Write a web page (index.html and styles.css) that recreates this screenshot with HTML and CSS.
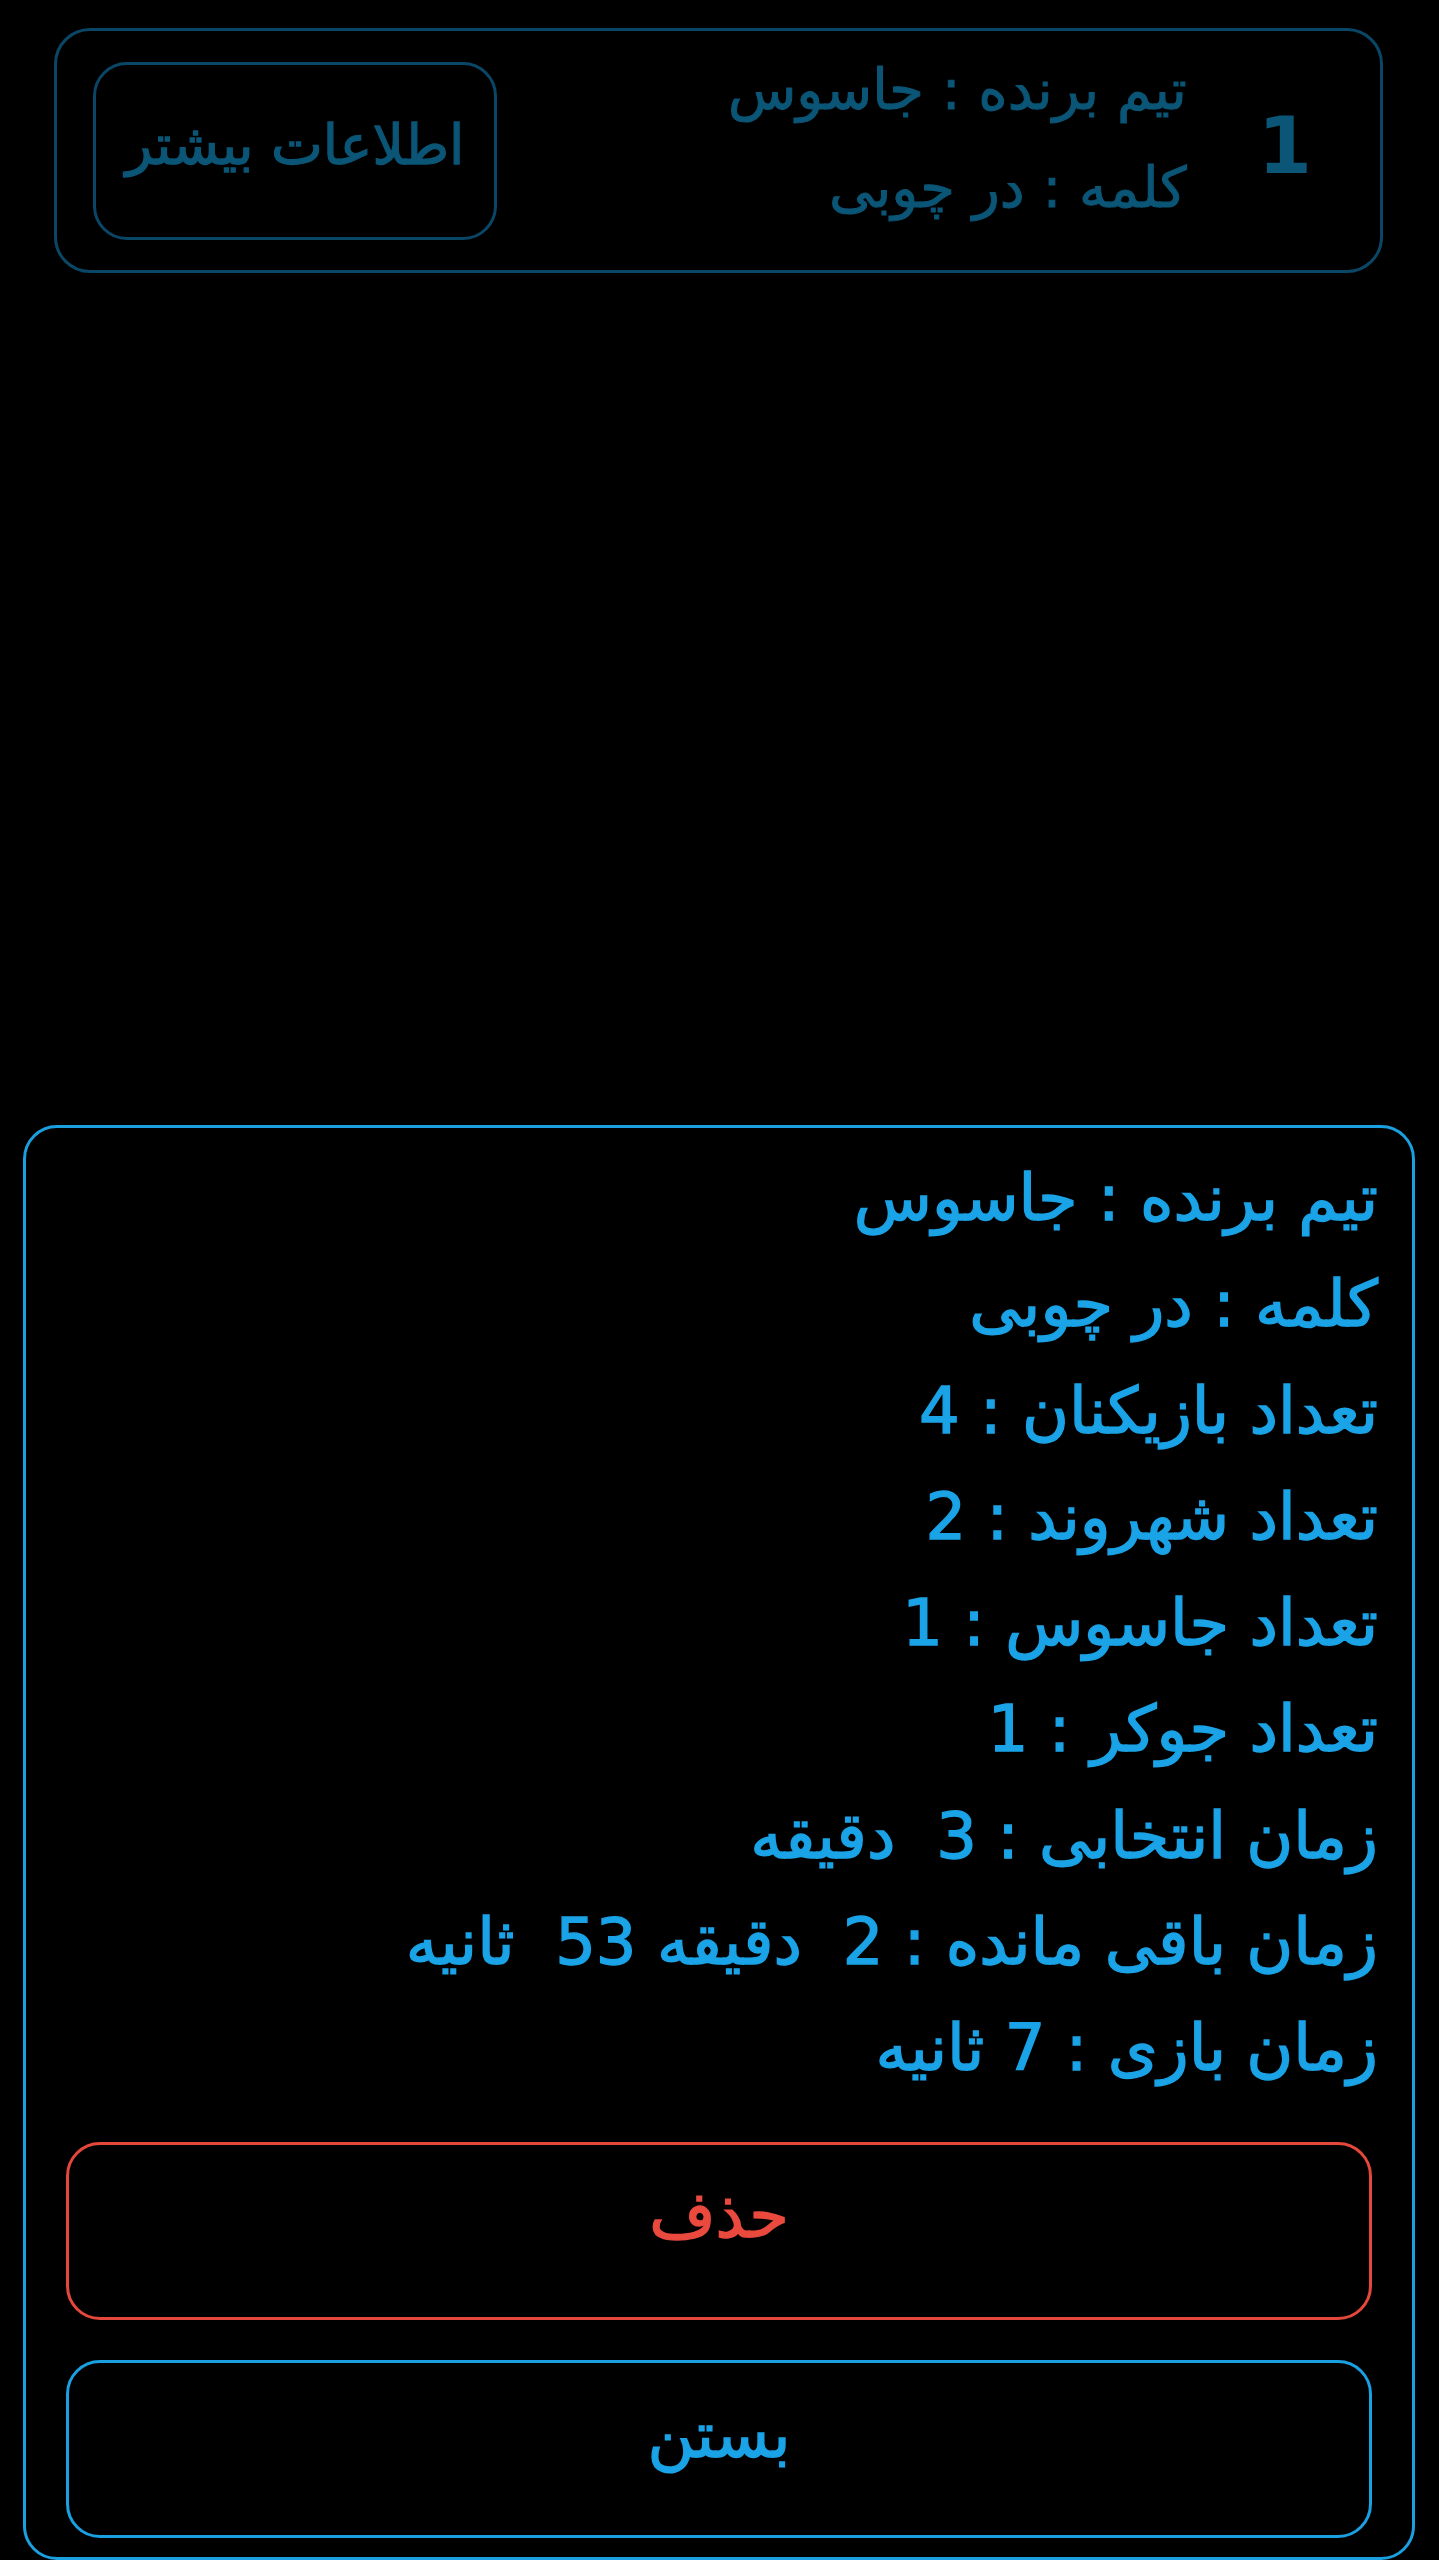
FILE: index.html
```html
<!DOCTYPE html>
<html lang="fa">
<head>
<meta charset="utf-8">
<title>بازی</title>
<link rel="stylesheet" href="styles.css">
</head>
<body>
<div class="page">
  <div class="game-card">
    <div class="game-number">1</div>
    <div class="game-summary">
      <div class="summary-line">تیم برنده : جاسوس</div>
      <div class="summary-line">کلمه : در چوبی</div>
    </div>
    <div class="more-btn">اطلاعات بیشتر</div>
  </div>

  <div class="details-panel">
    <div class="details-list">
      <div class="detail-line">تیم برنده : جاسوس</div>
      <div class="detail-line">کلمه : در چوبی</div>
      <div class="detail-line">تعداد بازیکنان : 4</div>
      <div class="detail-line">تعداد شهروند : 2</div>
      <div class="detail-line">تعداد جاسوس : 1</div>
      <div class="detail-line">تعداد جوکر : 1</div>
      <div class="detail-line">زمان انتخابی : 3  دقیقه</div>
      <div class="detail-line">زمان باقی مانده : 2  دقیقه 53  ثانیه</div>
      <div class="detail-line">زمان بازی : 7 ثانیه</div>
    </div>
    <div class="panel-btn btn-delete">حذف</div>
    <div class="panel-btn btn-close">بستن</div>
  </div>
</div>
</body>
</html>
```

FILE: styles.css
```css
html, body {
  margin: 0;
  padding: 0;
  background: #000;
}

body {
  font-family: "DejaVu Sans", sans-serif;
  width: 1439px;
  height: 2560px;
  overflow: hidden;
}

.page {
  display: flex;
  flex-direction: column;
  height: 2560px;
}

/* Top (dimmed) game card */
.game-card {
  box-sizing: border-box;
  direction: rtl;
  margin: 28px 56px 0 54px;
  height: 245px;
  border: 3px solid #0a4766;
  border-radius: 36px;
  display: flex;
  align-items: flex-start;
  padding: 0 68px 0 36px;
  color: #0b5576;
}

.game-number {
  font-weight: bold;
  font-size: 78px;
  line-height: 91px;
  margin-top: 70px;
}

.game-summary {
  margin-top: 10px;
  margin-right: 71px;
  font-size: 56px;
  line-height: 98px;
  white-space: nowrap;
  -webkit-text-stroke: 1px currentColor;
}

.more-btn {
  box-sizing: border-box;
  margin-top: 31px;
  margin-right: auto;
  width: 404px;
  height: 178px;
  border: 3px solid #0a4766;
  border-radius: 34px;
  display: flex;
  align-items: center;
  justify-content: center;
  padding-bottom: 12px;
  font-size: 55px;
  white-space: nowrap;
  -webkit-text-stroke: 1.3px currentColor;
}

/* Bottom details panel */
.details-panel {
  box-sizing: border-box;
  direction: rtl;
  margin: auto 24px 0 23px;
  height: 1435px;
  border: 3px solid #1a9fe0;
  border-radius: 34px;
  padding: 17px 40px 19px;
  display: flex;
  flex-direction: column;
}

.details-list {
  margin-right: -6px;
  color: #1aa3e6;
  font-size: 64px;
  line-height: 106.3px;
}

.detail-line {
  white-space: pre;
  -webkit-text-stroke: 1.4px currentColor;
}

.panel-btn {
  box-sizing: border-box;
  height: 178px;
  border: 3px solid;
  border-radius: 34px;
  display: flex;
  align-items: center;
  justify-content: center;
  font-size: 64px;
  -webkit-text-stroke: 1.4px currentColor;
}

.btn-delete {
  margin-top: 40px;
  border-color: #e4473c;
  color: #ea4a3e;
  padding-bottom: 32px;
}

.btn-close {
  margin-top: 40px;
  border-color: #1a9fe0;
  color: #1aa3e6;
  padding-bottom: 28px;
}
```
